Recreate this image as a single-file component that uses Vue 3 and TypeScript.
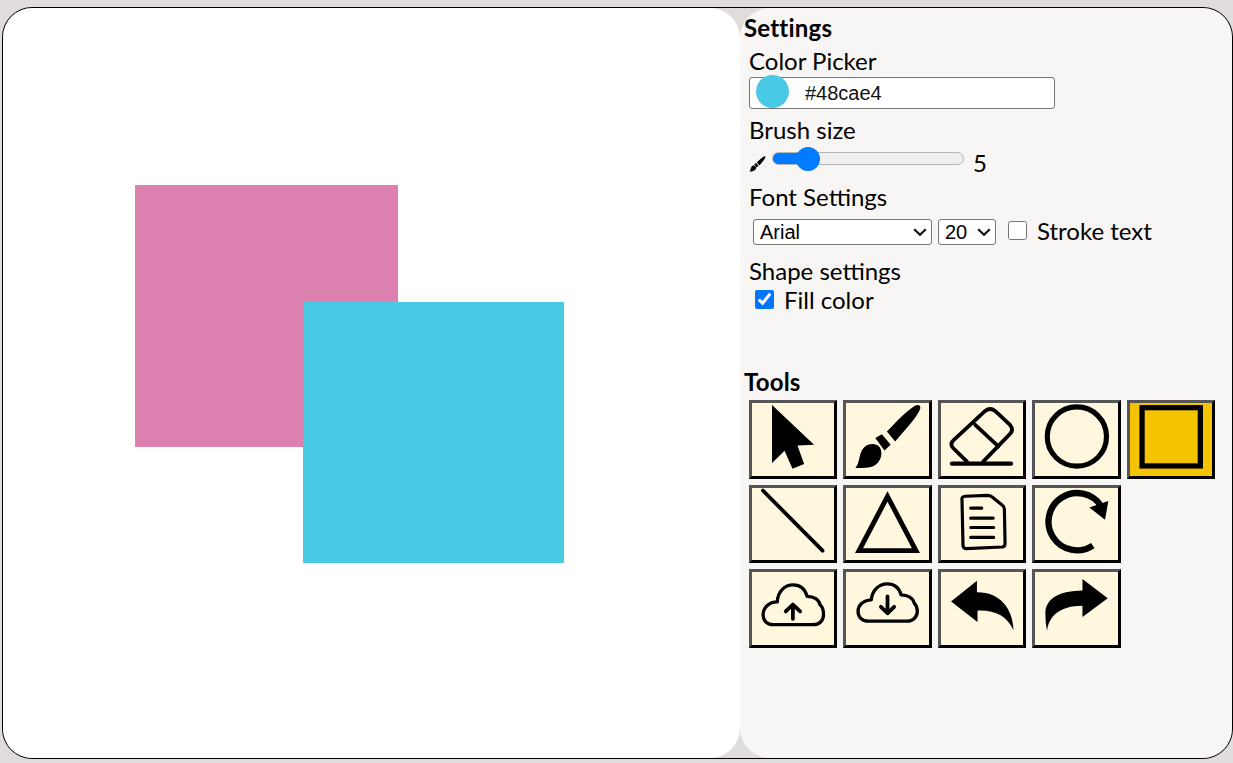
<script setup lang="ts">
import { ref } from 'vue'

const color = ref<string>('#48cae4')
const brush = ref<number>(5)
const font = ref<string>('Arial')
const size = ref<string>('20')
const strokeText = ref<boolean>(false)
const fillColor = ref<boolean>(true)
const cloudUp =
  'M21 53C14.500 53 10.700 48.500 10.700 43C10.700 36 16.500 30 25 30C25.500 20 32 13 41 13C48 13 53 17.500 55 24.500C62 24.500 67 28 68 33C70.500 35 71.500 39 71.500 43C71.500 49 67 53 61 53Z'
const cloudDown =
  'M22 49.500C15.500 49.500 11.700 45 11.700 39.500C11.700 33.500 16.500 28.500 25 28C26 18 33 12 41 12C48 12 53 16 55 23C62 23 67 26.500 68 31C70 33 71.300 36 71.300 39.500C71.300 45 67 49.500 61 49.500Z'
</script>

<template>
  <div class="app">
    <div class="canvas">
      <div class="shape pink"></div>
      <div class="shape blue"></div>
    </div>
    <aside class="panel">
      <h2 class="title">Settings</h2>
      <div class="group color-group">
        <div class="label">Color Picker</div>
        <div class="color-box">
          <span class="swatch"></span>
          <input v-model="color" class="hex" type="text" />
        </div>
      </div>
      <div class="group brush-group">
        <div class="label">Brush size</div>
        <div class="brush-row">
          <svg class="mini" viewBox="0 0 82 73" aria-hidden="true">
            <path d="M38 28C48 18 60 6 69 1.500C73 0 76 2 75 6C72 14 60 28 50 41Z" />
            <path d="M27 35L35 30L45 42L38 49Z" />
            <path d="M7 67C13 60 10 48 20 42C25 39 32 40 35.700 50C33 62 20 67 7 67Z" />
          </svg>
          <input v-model.number="brush" class="range" type="range" min="1" max="30" />
          <span class="value">{{ brush }}</span>
        </div>
      </div>
      <div class="group font-group">
        <div class="label">Font Settings</div>
        <div class="font-row">
          <span class="select-wrap font-wrap">
            <select v-model="font" class="select">
              <option>Arial</option>
              <option>Verdana</option>
            </select>
            <svg class="chevron" viewBox="0 0 14 8"><path d="M1.200 1.200L7 6.800L12.800 1.200" /></svg>
          </span>
          <span class="select-wrap size-wrap">
            <select v-model="size" class="select">
              <option>20</option>
              <option>24</option>
            </select>
            <svg class="chevron" viewBox="0 0 14 8"><path d="M1.200 1.200L7 6.800L12.800 1.200" /></svg>
          </span>
          <label class="check stroke-check">
            <input v-model="strokeText" type="checkbox" />
            <span>Stroke text</span>
          </label>
        </div>
      </div>
      <div class="group shape-group">
        <div class="label">Shape settings</div>
        <label class="check fill-check">
          <input v-model="fillColor" type="checkbox" />
          <span>Fill color</span>
        </label>
      </div>
      <h2 class="title tools-title">Tools</h2>
      <div class="tools">
        <div class="tool-row">
          <button class="tool" type="button">
            <svg viewBox="0 0 82 73"><path d="M19.700 2L62 42L45.300 42.700L52 61.300L40.300 66L32.300 48L19.700 60.300Z" /></svg>
          </button>
          <button class="tool" type="button">
            <svg viewBox="0 0 82 73">
              <path d="M40.700 28.700C50 19 60 8 69 2.700C72 1 75 2 74.300 5.500C72 13 60 26 49 38.700Z" />
              <path d="M29 35.300L35.700 31.300L44.500 42L38.300 47.700Z" />
              <path d="M9 65.300C14 60 12 50 18 44.500C22 40.500 30 40 33.500 44.500C37 50 35 60 27 63.500C21 65.500 15 65.300 9 65.300Z" />
            </svg>
          </button>
          <button class="tool" type="button">
            <svg viewBox="0 0 82 73" class="line-icon" stroke-width="3.800">
              <path d="M25.700 59L12 45.500Q8 41.500 12 37.500L44 8Q49 4 54 8L69 22Q73 27 69 31L42 59" />
              <path d="M34 22L57.300 43.700" />
              <path d="M10.500 61H70" stroke-width="4.200" />
            </svg>
          </button>
          <button class="tool" type="button">
            <svg viewBox="0 0 82 73" class="line-icon" stroke-width="5.200"><circle cx="41.700" cy="33.700" r="29.800" /></svg>
          </button>
          <button class="tool active" type="button">
            <svg viewBox="0 0 82 73" class="line-icon" stroke-width="5.300"><rect x="11.700" y="4.700" width="58.600" height="58.600" /></svg>
          </button>
        </div>
        <div class="tool-row">
          <button class="tool" type="button">
            <svg viewBox="0 0 82 73" class="line-icon" stroke-width="3.800"><path d="M10.500 2.500L70.500 63" /></svg>
          </button>
          <button class="tool" type="button">
            <svg viewBox="0 0 82 73" class="line-icon miter" stroke-width="4.900"><path d="M41.300 8.500L12.700 63H69.900Z" /></svg>
          </button>
          <button class="tool" type="button">
            <svg viewBox="0 0 82 73" class="line-icon" stroke-width="3.200">
              <path d="M20.700 12Q20 8.500 24 8.300L46 7.500Q49 7.500 51 9L61 17Q63.300 18.700 63.300 21L64 56Q64 59 61 59.300L25 61Q22 61 21.700 58Z" />
              <path d="M29.500 20.300H40.500M29.500 30.300H52M29.500 39.700H52.500M29.500 49.700H52.500" />
            </svg>
          </button>
          <button class="tool" type="button">
            <svg viewBox="0 0 82 73">
              <path class="stroke-only" d="M57.700 58A28.800 28.800 0 1 1 66 18" stroke-width="6.400" />
              <path d="M73.300 13L70 32L54.300 19.700Z" />
            </svg>
          </button>
        </div>
        <div class="tool-row">
          <button class="tool" type="button">
            <svg viewBox="0 0 82 73" class="line-icon" stroke-width="3.300">
              <path :d="cloudUp" />
              <path d="M40.700 47V33M33.500 39.700L40.700 32.700L48 39.700" stroke-width="3.800" />
            </svg>
          </button>
          <button class="tool" type="button">
            <svg viewBox="0 0 82 73" class="line-icon" stroke-width="3.300">
              <path :d="cloudDown" />
              <path d="M41.300 24.500V41M34.700 35L41.300 41.500L48 35" stroke-width="3.800" />
            </svg>
          </button>
          <button class="tool" type="button">
            <svg viewBox="0 0 82 73"><path d="M9.700 29.700L35.700 8.700V20.300C58 20 72 36 72.500 58.700C66 44 54 38 36.300 38.700V50.300Z" /></svg>
          </button>
          <button class="tool" type="button">
            <svg viewBox="0 0 82 73"><path d="M72.700 26.300L47.300 7V18.700C25 19 10 26 10 42Q10 52 11.700 59.700C13 45 24 34 47.300 34V45.300Z" /></svg>
          </button>
        </div>
      </div>
    </aside>
  </div>
</template>

<style>
html,
body {
  margin: 0;
  background: #e0dcdc;
}
</style>

<style scoped>
.app {
  box-sizing: border-box;
  display: flex;
  width: 1231px;
  height: 752px;
  margin: 7px 0 0 2px;
  border: 1px solid #000;
  border-radius: 30px;
  background: #e0dcdc;
  overflow: hidden;
  font-family: Lato, sans-serif;
  font-size: 24px;
  color: #000;
}
.canvas {
  position: relative;
  width: 737px;
  flex: none;
  background: #fff;
  border-radius: 30px;
}
.shape {
  position: absolute;
}
.pink {
  left: 132px;
  top: 177px;
  width: 263px;
  height: 262px;
  background: #dc80b0;
}
.blue {
  left: 300px;
  top: 294px;
  width: 261px;
  height: 261px;
  background: #48cae4;
}
.panel {
  flex: 1;
  min-width: 0;
  background: #f8f6f4;
  border-radius: 30px;
  padding: 5px 0 0 4px;
}
.title {
  margin: 0;
  font-size: 24px;
  line-height: 29px;
  font-weight: 700;
  letter-spacing: 0.2px;
}
.group {
  margin-left: 5px;
}
.color-group {
  margin-top: 4px;
}
.label {
  line-height: 29px;
}
.color-box {
  box-sizing: border-box;
  display: flex;
  align-items: flex-start;
  width: 306px;
  height: 32px;
  margin-top: 2px;
  border: 1px solid #767676;
  border-radius: 3px;
  background: #fff;
}
.swatch {
  flex: none;
  width: 33px;
  height: 33px;
  margin: -3px 0 0 6px;
  border-radius: 50%;
  background: #48cae4;
}
.hex {
  flex: 1;
  align-self: center;
  min-width: 0;
  border: 0;
  outline: 0;
  padding: 0;
  margin-left: 16px;
  background: transparent;
  font: 20px "Liberation Sans", Arial, sans-serif;
  color: #111;
}
.brush-group {
  margin-top: 6px;
}
.brush-row {
  display: flex;
  align-items: center;
  height: 29px;
  margin-top: 2px;
}
.mini {
  flex: none;
  width: 19px;
  height: 19px;
  margin: 7px 0 0 -1px;
}
.range {
  appearance: none;
  -webkit-appearance: none;
  flex: none;
  width: 192px;
  height: 13px;
  margin: 0 0 4px 5px;
  padding: 0;
  border: 1px solid #b5b5b5;
  border-radius: 7px;
  box-sizing: border-box;
  background: linear-gradient(to right, #007bff 0 30px, #efefef 30px);
}
.range::-webkit-slider-thumb {
  appearance: none;
  -webkit-appearance: none;
  width: 24px;
  height: 24px;
  border-radius: 50%;
  background: #007bff;
}
.value {
  margin-left: 9px;
  line-height: 29px;
  margin-top: 3px;
}
.font-group {
  margin-top: 7px;
}
.font-row {
  display: flex;
  align-items: center;
  height: 29px;
  margin-top: 6px;
  padding-left: 4px;
}
.select-wrap {
  position: relative;
  display: block;
  height: 26px;
}
.font-wrap {
  width: 179px;
}
.size-wrap {
  width: 58px;
  margin-left: 6px;
}
.select {
  appearance: none;
  -webkit-appearance: none;
  display: block;
  width: 100%;
  height: 26px;
  box-sizing: border-box;
  padding: 0 0 0 6px;
  font: 20px "Liberation Sans", Arial, sans-serif;
  color: #000;
  background: #fff;
  border: 1px solid #767676;
  border-radius: 3px;
}
.chevron {
  position: absolute;
  right: 5px;
  top: 9px;
  width: 14px;
  height: 8px;
  fill: none;
  stroke: #111;
  stroke-width: 2.200;
  pointer-events: none;
}
.check {
  display: flex;
  align-items: center;
  line-height: 29px;
}
.check input {
  width: 19px;
  height: 19px;
  margin: 0;
  accent-color: #0075ff;
}
.stroke-check {
  margin: -2px 0 0 12px;
}
.stroke-check span {
  margin-left: 10px;
}
.shape-group {
  margin-top: 10px;
}
.fill-check {
  margin-left: 6px;
}
.fill-check span {
  margin-left: 10px;
}
.tools-title {
  margin-top: 53px;
}
.tools {
  display: flex;
  flex-direction: column;
  gap: 6px;
  margin: 4px 0 0 5px;
}
.tool-row {
  display: flex;
  gap: 6px;
}
.tool {
  box-sizing: border-box;
  width: 88.400px;
  height: 78.600px;
  padding: 0;
  border: 3px solid;
  border-color: #555 #000 #000 #555;
  background: #fff7de;
  display: block;
}
.tool svg {
  display: block;
  width: 100%;
  height: 100%;
}
.tool.active {
  background: #f5c400;
}
.line-icon {
  fill: none;
  stroke: #000;
  stroke-linecap: round;
  stroke-linejoin: round;
}
.miter {
  stroke-linejoin: miter;
}
.line-icon rect {
  stroke-linejoin: miter;
}
.stroke-only {
  fill: none;
  stroke: #000;
}
</style>
